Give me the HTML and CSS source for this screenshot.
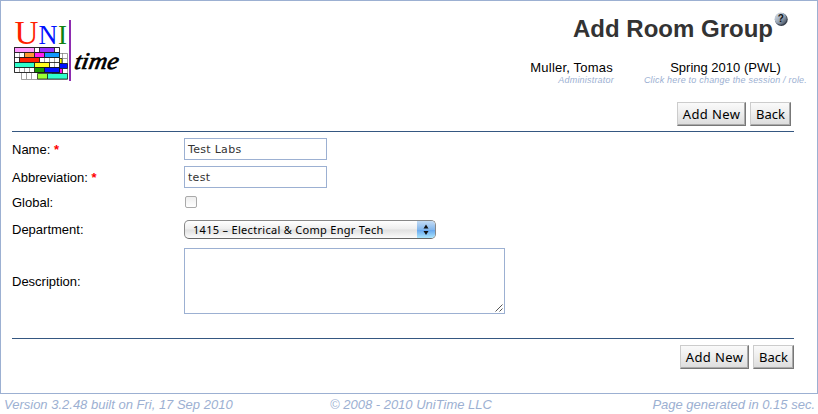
FILE: index.html
```
<!DOCTYPE html>
<html lang="en">
<head>
<meta charset="utf-8">
<title>Add Room Group</title>
<link rel="stylesheet" href="styles.css">
</head>
<body>
<main class="panel">
  <header class="header">
    <svg class="logo" width="110" height="68" viewBox="12 16 110 68" role="img" aria-label="UniTime">
      <g class="logo-serif">
        <text x="14.5" y="43.500" font-size="33" textLength="24" lengthAdjust="spacingAndGlyphs" fill="#ff2000">U</text>
        <text x="38.5" y="43.500" font-size="27" textLength="19" lengthAdjust="spacingAndGlyphs" fill="#0010ff">N</text>
        <text x="58" y="43.500" font-size="27" textLength="9" lengthAdjust="spacingAndGlyphs" fill="#108010">I</text>
      </g>
      <g stroke="#777" stroke-width=".7" fill="#fff">
        <path d="M21.5 53.5h46v26h-46zM26.5 73v6M31.5 73v6M62.5 53v20M60 58.500h7M60 63.500h7M60 68.500h7M60 73.500h7"/>
      </g>
      <g stroke="#111" stroke-width=".7">
        <path fill="#ffff00" d="M58 58.500h4v5h-4z"/>
        <path fill="#0010ff" d="M58 63.500h9.500v5H58z"/>
        <path fill="#ff10e8" d="M52 68.500h10.500v5H52z"/>
        <path fill="#99ff33" d="M37.500 73.500h10v5.500h-10z"/>
        <path fill="#30ffcc" d="M47.500 73.500h20v5.500h-20z"/>
      </g>
      <g stroke="#777" stroke-width=".7">
        <path fill="#fff" d="M14.500 47.500h45v25h-45z"/>
        <path d="M19.500 52v10M19.500 67v5M24.500 68v4M29.500 68v4M44.500 57v5M49.500 57v11M54.500 57v11M39.500 57v5" fill="none"/>
      </g>
      <g stroke="#111" stroke-width=".8">
        <path fill="none" d="M14.500 47.500h45v25h-45zM14 52.500h45M14 57.500h45M14 62.500h45M14 67.500h45"/>
        <path fill="#ff99ff" d="M14.500 47.500h20v5h-20z"/>
        <path fill="#9933ff" d="M39.500 47.500h15v5h-15z"/>
        <path fill="#ff9933" d="M24.500 52.500h10v5h-10z"/>
        <path fill="#ff20f0" d="M34.500 52.500h10v5h-10z"/>
        <path fill="#1098ff" d="M44.500 52.500h15v5h-15z"/>
        <path fill="#ff2000" d="M19.500 57.500h20v5h-20z"/>
        <path fill="#30ffcc" d="M14.500 62.500h20v5h-20z"/>
        <path fill="#ffff20" d="M34.500 62.500h15v5h-15z"/>
        <path fill="#189900" d="M34.500 67.500h10v5h-10z"/>
        <path fill="#0010ff" d="M44.500 67.500h15v5h-15z"/>
      </g>
      <path fill="#8e2bb0" d="M69 20h2v61h-2z"/>
      <text class="logo-script" transform="translate(73.500 69) skewX(-10)" font-size="24" textLength="44" lengthAdjust="spacingAndGlyphs">time</text>
    </svg>
    <div class="heading">
      <h1 class="title">Add Room Group<svg class="help" width="14" height="14" viewBox="0 0 14 14">
        <defs><linearGradient id="ball" x1="0" y1="0" x2="1" y2="1"><stop offset="0" stop-color="#e2e7ee"/><stop offset=".5" stop-color="#9ca9b9"/><stop offset="1" stop-color="#344050"/></linearGradient></defs>
        <circle cx="7.300" cy="7.500" r="6.400" fill="#343c49"/><circle cx="6.700" cy="6.700" r="6.100" fill="url(#ball)"/>
        <text x="3.800" y="10.300" font-size="10" fill="#111">?</text>
      </svg></h1>
      <div class="session">
        <div class="who"><span>Muller, Tomas</span><em>Administrator</em></div>
        <div class="term"><span>Spring 2010 (PWL)</span><em>Click here to change the session / role.</em></div>
      </div>
    </div>
  </header>
  <div class="actions top"><button class="btn add">Add New</button><button class="btn back">Back</button></div>
  <form class="form">
    <label>Name: <b>*</b></label><div class="field">Test Labs</div>
    <label>Abbreviation: <b>*</b></label><div class="field">test</div>
    <label>Global:</label><span class="check"></span>
    <label>Department:</label>
    <div class="select"><span>1415 – Electrical &amp; Comp Engr Tech</span>
      <svg class="arrows" width="18" height="18" viewBox="0 0 18 18"><path d="M6.500 7.500l2.500-4 2.500 4zM6.500 10h5L9 14z" fill="#111"/></svg>
    </div>
    <label>Description:</label>
    <div class="area"><svg width="8" height="8" viewBox="0 0 8 8"><path d="M.5 7.500l7-7M4.500 7.500l3-3" stroke="#555" fill="none"/></svg></div>
  </form>
  <div class="actions bottom"><button class="btn add">Add New</button><button class="btn back">Back</button></div>
</main>
<footer class="footer"><span class="version">Version 3.2.48 built on Fri, 17 Sep 2010</span><span class="copy">© 2008 - 2010 UniTime LLC</span><span class="timing">Page generated in 0.15 sec.</span></footer>
</body>
</html>
```
FILE: styles.css
```
* { box-sizing: border-box; }
body {
  margin: 0;
  height: 414px;
  overflow: hidden;
  background: #fff;
  color: #000;
  font: 13px/15px "Liberation Sans", Arial, sans-serif;
}
.panel { height: 394px; border: 1px solid #9cb0d2; padding: 0 0 0 11px; }
.header { height: 101px; display: flex; justify-content: space-between; }
.logo { margin-top: 15px; }
.logo-serif { font-family: "Liberation Serif", serif; }
.logo-script { font-family: "Liberation Serif", cursive; font-style: italic; stroke: #000; stroke-width: .7px; }
.heading { width: 300px; }
.title {
  margin: 13px 29px 0 0;
  height: 30px;
  display: flex;
  justify-content: flex-end;
  font-size: 24px;
  line-height: 30px;
  color: #333;
  white-space: nowrap;
}
.help { margin: -2px 0 0 1px; font-family: "Liberation Sans", sans-serif; font-weight: bold; }
.session { display: flex; justify-content: flex-end; gap: 30px; margin: 16px 10px 0 0; }
.session span, .session em { display: block; white-space: nowrap; }
.session em { font-size: 9px; line-height: 11px; letter-spacing: .2px; color: #9cb0d2; }
.who { text-align: right; }
.who span { padding-right: 1px; letter-spacing: .2px; }
.term { text-align: center; }
.actions { display: flex; gap: 4px; justify-content: flex-end; }
.top { margin-right: 26px; height: 29px; }
.bottom { margin-right: 23px; padding-top: 6px; border-top: 1px solid #355781; }
.btn {
  height: 24px;
  padding: 0;
  border: 1px solid;
  border-color: #ccc #777 #777 #ccc;
  box-shadow: inset -1px -1px #aaa;
  background: linear-gradient(#fafafa, #eee 45%, #dcdcdc);
  font: 13px/20px "Noto Sans", sans-serif;
  color: #000;
  white-space: nowrap;
}
.add { width: 69px; letter-spacing: .4px; }
.back { width: 41px; }
.form {
  margin-right: 23px;
  height: 207px;
  padding-top: 6px;
  border-top: 1px solid #355781;
  display: grid;
  grid-template-columns: 172px 1fr;
  grid-template-rows: 22px 22px 16px 26px 66px;
  row-gap: 6px;
  align-items: center;
}
.form label b { color: #f00; }
.field {
  width: 143px;
  height: 22px;
  border: 1px solid #9cb0d2;
  padding: 1px 0 0 3px;
  font: 11px/20px "DejaVu Sans", sans-serif;
  letter-spacing: .3px;
  color: #333;
}
.check {
  width: 12px;
  height: 12px;
  margin-left: 1px;
  border: 1px solid #aaa;
  border-radius: 2px;
  background: linear-gradient(#eee, #fff);
}
.select {
  width: 252px;
  height: 19px;
  display: flex;
  justify-content: space-between;
  border: 1px solid #888;
  border-bottom-color: #666;
  border-radius: 5px;
  overflow: hidden;
  padding-left: 8px;
  background: linear-gradient(#fff, #eee 48%, #e0e0e0 52%, #fbfbfb);
  font: 11px/17px "Noto Sans", sans-serif;
  letter-spacing: .3px;
}
.arrows { background: linear-gradient(#c4dcf5, #80b5ec 50%, #69aaf0 52%, #b4eeff); }
.area { width: 321px; height: 66px; border: 1px solid #9cb0d2; display: flex; align-items: flex-end; justify-content: flex-end; padding: 1px; }
.footer { display: flex; padding: 3px 3px 0 4px; font-style: italic; color: #9cb0d2; }
.version { width: 326px; }
.timing { margin-left: auto; }
```
